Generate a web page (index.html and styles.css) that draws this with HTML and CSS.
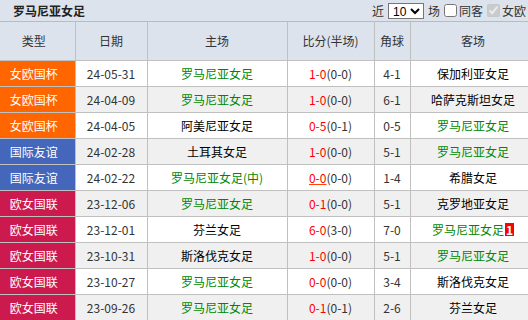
FILE: index.html
```html
<!DOCTYPE html>
<html>
<head>
<meta charset="utf-8">
<link rel="stylesheet" href="styles.css">
</head>
<body>
<div class="panel">
  <div class="bar">
    <span class="title">罗马尼亚女足</span>
    <div class="ctrl">
      <span>近</span>
      <select class="sel"><option>10</option><option>20</option></select>
      <span>场</span>
      <label class="chk"><input type="checkbox">同客</label>
      <label class="chk"><input type="checkbox" checked disabled>女欧</label>
    </div>
  </div>
  <table class="tbl">
    <colgroup>
      <col class="c1"><col class="c2"><col class="c3"><col class="c4"><col class="c5"><col class="c6">
    </colgroup>
    <thead>
      <tr><th class="type">类型</th><th>日期</th><th>主场</th><th>比分(半场)</th><th>角球</th><th>客场</th></tr>
    </thead>
    <tbody>
      <tr><td class="type cup">女欧国杯</td><td>24-05-31</td><td class="win">罗马尼亚女足</td><td><span class="red">1-0</span>(0-0)</td><td>4-1</td><td>保加利亚女足</td></tr>
      <tr class="alt"><td class="type cup">女欧国杯</td><td>24-04-09</td><td class="win">罗马尼亚女足</td><td><span class="red">1-0</span>(0-0)</td><td>6-1</td><td>哈萨克斯坦女足</td></tr>
      <tr><td class="type cup">女欧国杯</td><td>24-04-05</td><td>阿美尼亚女足</td><td><span class="red">0-5</span>(0-1)</td><td>0-5</td><td class="win">罗马尼亚女足</td></tr>
      <tr class="alt"><td class="type fr">国际友谊</td><td>24-02-28</td><td>土耳其女足</td><td><span class="red">1-0</span>(0-0)</td><td>5-1</td><td class="win">罗马尼亚女足</td></tr>
      <tr><td class="type fr">国际友谊</td><td>24-02-22</td><td class="win">罗马尼亚女足(中)</td><td><span class="red ul">0-0</span>(0-0)</td><td>1-4</td><td>希腊女足</td></tr>
      <tr class="alt"><td class="type lg">欧女国联</td><td>23-12-06</td><td class="win">罗马尼亚女足</td><td><span class="red">0-1</span>(0-0)</td><td>5-1</td><td>克罗地亚女足</td></tr>
      <tr><td class="type lg">欧女国联</td><td>23-12-01</td><td>芬兰女足</td><td><span class="red">6-0</span>(3-0)</td><td>7-0</td><td class="win">罗马尼亚女足<span class="badge">1</span></td></tr>
      <tr class="alt"><td class="type lg">欧女国联</td><td>23-10-31</td><td>斯洛伐克女足</td><td><span class="red">1-0</span>(0-0)</td><td>5-1</td><td class="win">罗马尼亚女足</td></tr>
      <tr><td class="type lg">欧女国联</td><td>23-10-27</td><td class="win">罗马尼亚女足</td><td><span class="red">0-0</span>(0-0)</td><td>3-4</td><td>斯洛伐克女足</td></tr>
      <tr class="alt"><td class="type lg">欧女国联</td><td>23-09-26</td><td class="win">罗马尼亚女足</td><td><span class="red">0-1</span>(0-1)</td><td>2-6</td><td>芬兰女足</td></tr>
    </tbody>
  </table>
</div>
</body>
</html>
```

FILE: styles.css
```css
html, body {
  margin: 0;
  padding: 0;
  overflow: hidden;
  background: #ffffff;
}
.panel {
  width: 536px;
  font-family: "Noto Sans CJK SC", "Noto Sans", sans-serif;
  font-size: 12px;
  color: #333333;
}
.bar {
  width: 536px;
  height: 21px;
  background: #dde3ec;
  border-bottom: 1px solid #bbbbbb;
  display: flex;
  align-items: center;
  overflow: hidden;
}
.title {
  font-weight: bold;
  color: #222222;
  padding-left: 13px;
  line-height: 21px;
}
.ctrl {
  margin-left: 287px;
  display: flex;
  align-items: center;
  gap: 4px;
  white-space: nowrap;
  color: #333333;
}
.sel {
  width: 36px;
  height: 16px;
  font-size: 12px;
  padding: 0;
  font-family: "Liberation Sans", sans-serif;
  border: 1px solid #767676;
  background: #ffffff;
}
.chk {
  display: flex;
  align-items: center;
}
.chk input {
  width: 13px;
  height: 13px;
  margin: 0 2px 0 0;
}
.tbl {
  border-collapse: collapse;
  table-layout: fixed;
  width: 536px;
}
.c1 { width: 75px; }
.c2 { width: 72px; }
.c3 { width: 140px; }
.c4 { width: 87px; }
.c5 { width: 36px; }
.c6 { width: 126px; }
.tbl th, .tbl td {
  border: 1px solid #c0c0c0;
  text-align: center;
  padding: 0;
  white-space: nowrap;
  overflow: hidden;
}
.tbl tr > :first-child { border-left: none; }
.tbl thead tr { height: 38px; }
.tbl th {
  background: #dde3ec;
  font-weight: normal;
  color: #333333;
  border-top: none;
}
.tbl tbody tr { height: 26px; }
.tbl tbody tr.alt td { background: #f0f0f0; }
.tbl .type { padding-right: 7px; }
.tbl tbody td.type { color: #ffffff; }
.tbl tbody tr td.cup { background: #ff6600; }
.tbl tbody tr td.fr { background: #4466bb; }
.tbl tbody tr td.lg { background: #cc1a4e; }
td { color: #000000; }
td:nth-child(2), td:nth-child(4), td:nth-child(5) { color: #333333; }
.tbl td.win { color: #008800; }
.red { color: #ff0000; }
.ul { text-decoration: underline; text-decoration-color: #ff4400; }
.badge {
  display: inline-block;
  background: #ff0000;
  color: #ffffff;
  font-weight: bold;
  padding: 0 1px;
  line-height: 13px;
  margin-left: 1px;
}
```
